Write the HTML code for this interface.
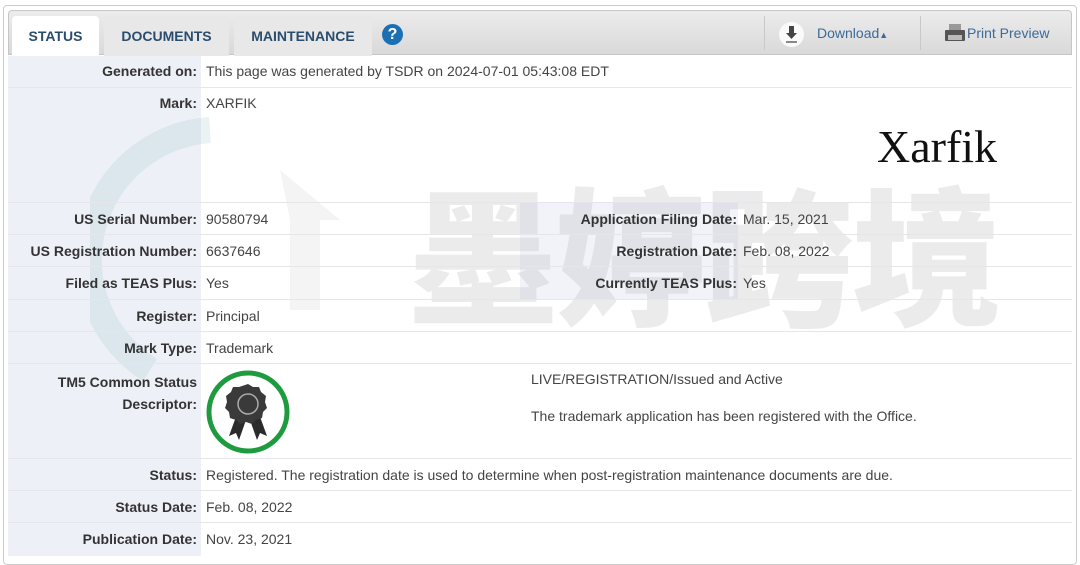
<!DOCTYPE html>
<html><head><meta charset="utf-8"><style>
*{margin:0;padding:0;box-sizing:border-box}
body{width:1080px;height:557px;background:#fff;font-family:"Liberation Sans",Arial,sans-serif;font-size:14px;color:#333;position:relative;overflow:hidden}
.frame{position:absolute;left:3px;top:5px;width:1074px;height:560px;border:1px solid #ccc;border-radius:4px}
.bar{position:absolute;left:8px;top:10px;width:1064px;height:45px;background:linear-gradient(#ececec,#d9d9d9);border:1px solid #c6c6c6;border-radius:4px 4px 0 0}
.tab{position:absolute;top:16px;height:40px;background:#e8e8e8;border-radius:4px 4px 0 0;font-weight:bold;color:#2a4d6e;font-size:14px;text-align:center;line-height:40px}
.lcol{position:absolute;left:8px;top:56px;width:193px;height:500px;background:#eef0f7}
.rcol{position:absolute;left:520px;top:203px;width:218px;height:96px;background:#eef0f7;opacity:.8}
.line{position:absolute;left:8px;right:8px;height:1px;background:#e6e6ea}
.lab{position:absolute;font-weight:bold;text-align:right;color:#333}
.val{position:absolute;color:#444}
.wm{position:absolute;left:408px;top:150px;font-family:"Noto Sans CJK SC","WenQuanYi Zen Hei",sans-serif;font-weight:900;font-size:150px;color:rgba(190,190,190,.3);letter-spacing:-2px;white-space:nowrap;line-height:200px}
</style></head><body>
<div class="frame"></div>
<div class="bar"></div>
<div class="tab" style="left:12px;width:87px;background:#fff;color:#2a4d6e;height:41px">STATUS</div>
<div class="tab" style="left:104px;width:125px">DOCUMENTS</div>
<div class="tab" style="left:234px;width:138px">MAINTENANCE</div>
<div style="position:absolute;left:382px;top:24px;width:21px;height:21px;border-radius:50%;background:#1c6fb3;color:#fff;font-weight:bold;font-size:16px;text-align:center;line-height:21px">?</div>
<div style="position:absolute;left:764px;top:16px;width:1px;height:34px;background:#c8c8c8"></div>
<div style="position:absolute;left:920px;top:16px;width:1px;height:34px;background:#c8c8c8"></div>
<div style="position:absolute;left:779px;top:22px;width:25px;height:25px;border-radius:50%;background:#fafafa"></div>
<svg style="position:absolute;left:783px;top:25px" width="17" height="19" viewBox="0 0 17 19"><path d="M6 1h5v7h3l-5.5 6L3 8h3z" fill="#444"/><rect x="3" y="16" width="11" height="2" fill="#888"/></svg>
<div style="position:absolute;left:817px;top:25px;color:#3a6a9a;font-size:14px">Download<span style="font-size:9px">&#9650;</span></div>
<svg style="position:absolute;left:944px;top:24px" width="22" height="18" viewBox="0 0 22 18"><rect x="5" y="0" width="12" height="7" fill="#999"/><rect x="1" y="6" width="20" height="11" rx="1" fill="#555"/><rect x="4" y="11" width="14" height="5" fill="#bbb"/></svg>
<div style="position:absolute;left:967px;top:25px;color:#3a6a9a;font-size:14px">Print Preview</div>

<div class="lcol"></div>
<div class="rcol"></div>
<div class="wm">墨婷跨境</div>
<svg style="position:absolute;left:90px;top:110px" width="320" height="300" viewBox="0 0 320 300"><path d="M120 20 A130 130 0 0 0 60 260" stroke="rgba(150,190,200,.2)" stroke-width="26" fill="none"/><path d="M190 60 L250 110 L230 110 L230 200 L200 200 L200 110 Z" fill="rgba(180,180,180,.15)"/></svg>

<div class="line" style="top:87px"></div>
<div class="line" style="top:202px"></div>
<div class="line" style="top:234px"></div>
<div class="line" style="top:266px"></div>
<div class="line" style="top:299px"></div>
<div class="line" style="top:331px"></div>
<div class="line" style="top:363px"></div>
<div class="line" style="top:458px"></div>
<div class="line" style="top:490px"></div>
<div class="line" style="top:522px"></div>

<div class="lab" style="right:883px;top:63px">Generated on:</div><div class="val" style="left:206px;top:63px">This page was generated by TSDR on 2024-07-01 05:43:08 EDT</div>
<div class="lab" style="right:883px;top:95px">Mark:</div><div class="val" style="left:206px;top:95px">XARFIK</div>
<div style="position:absolute;left:877px;top:120px;font-family:'Liberation Serif',serif;font-size:46px;color:#111">Xarfik</div>
<div class="lab" style="right:883px;top:211px">US Serial Number:</div><div class="val" style="left:206px;top:211px">90580794</div>
<div class="lab" style="right:883px;top:243px">US Registration Number:</div><div class="val" style="left:206px;top:243px">6637646</div>
<div class="lab" style="right:883px;top:275px">Filed as TEAS Plus:</div><div class="val" style="left:206px;top:275px">Yes</div>
<div class="lab" style="right:883px;top:308px">Register:</div><div class="val" style="left:206px;top:308px">Principal</div>
<div class="lab" style="right:883px;top:340px">Mark Type:</div><div class="val" style="left:206px;top:340px">Trademark</div>
<div class="lab" style="right:883px;top:371px;line-height:22px">TM5 Common Status<br>Descriptor:</div>
<div class="lab" style="right:343px;top:211px">Application Filing Date:</div><div class="val" style="left:743px;top:211px">Mar. 15, 2021</div>
<div class="lab" style="right:343px;top:243px">Registration Date:</div><div class="val" style="left:743px;top:243px">Feb. 08, 2022</div>
<div class="lab" style="right:343px;top:275px">Currently TEAS Plus:</div><div class="val" style="left:743px;top:275px">Yes</div>
<svg style="position:absolute;left:204px;top:368px" width="88" height="88" viewBox="0 0 88 88"><circle cx="44" cy="44" r="39" fill="#fff" stroke="#1e9a3f" stroke-width="5"/><path d="M33 46 L25 68 L32 65 L35 72 L42 52 Z M55 46 L63 68 L56 65 L53 72 L46 52 Z" fill="#2b2b2b"/><path d="M44 16 l5 3 6 0 2 5 5 4 -1 6 2 6 -4 4 -1 6 -6 2 -4 4 -6 -2 -6 2 -4 -4 -6 -2 -1 -6 -4 -4 2 -6 -1 -6 5 -4 2 -5 6 0 z" fill="#3a3a3a"/><circle cx="44" cy="36" r="10" fill="none" stroke="#aaa" stroke-width="1.5"/></svg>
<div class="val" style="left:531px;top:371px">LIVE/REGISTRATION/Issued and Active</div>
<div class="val" style="left:531px;top:408px">The trademark application has been registered with the Office.</div>
<div class="lab" style="right:883px;top:467px">Status:</div><div class="val" style="left:206px;top:467px">Registered. The registration date is used to determine when post-registration maintenance documents are due.</div>
<div class="lab" style="right:883px;top:499px">Status Date:</div><div class="val" style="left:206px;top:499px">Feb. 08, 2022</div>
<div class="lab" style="right:883px;top:531px">Publication Date:</div><div class="val" style="left:206px;top:531px">Nov. 23, 2021</div>
</body></html>
